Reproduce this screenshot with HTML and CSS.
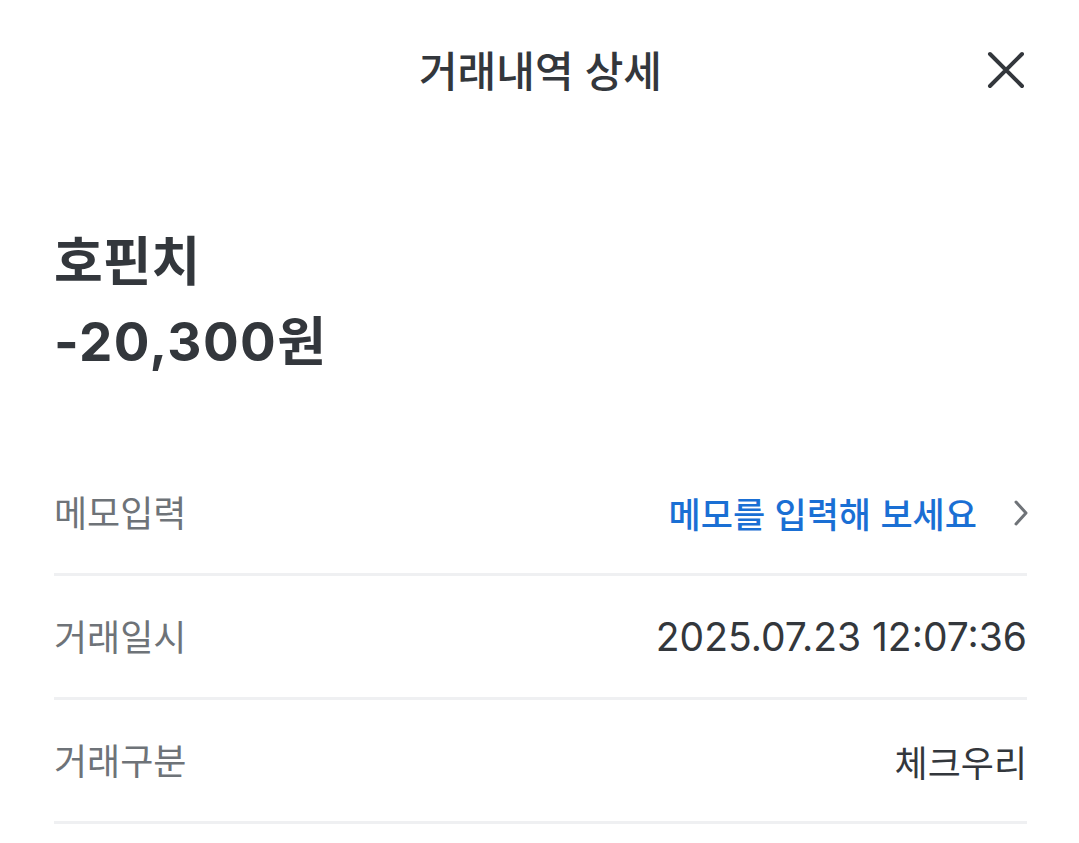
FILE: index.html
```html
<!DOCTYPE html>
<html lang="ko">
<head>
<meta charset="utf-8">
<title>거래내역 상세</title>
<link rel="stylesheet" href="styles.css">
</head>
<body>
<div class="page">
  <header class="header">
    <h1 class="header-title">거래내역 상세</h1>
    <button class="close-btn" aria-label="닫기">
      <svg width="40" height="40" viewBox="0 0 40 40"><path d="M4 4 L36 36 M36 4 L4 36" stroke="#33373c" stroke-width="4" stroke-linecap="round" fill="none"/></svg>
    </button>
  </header>
  <section class="summary">
    <div class="merchant">호핀치</div>
    <div class="amount">-20,300원</div>
  </section>
  <ul class="rows">
    <li class="row">
      <span class="label">메모입력</span>
      <span class="memo-link">메모를 입력해 보세요
        <svg class="chevron" width="16" height="26" viewBox="0 0 16 26"><path d="M3 2 L13 13 L3 24" stroke="#6f7378" stroke-width="3" stroke-linecap="round" stroke-linejoin="round" fill="none"/></svg>
      </span>
    </li>
    <li class="row">
      <span class="label">거래일시</span>
      <span class="value value-date">2025.07.23 12:07:36</span>
    </li>
    <li class="row">
      <span class="label">거래구분</span>
      <span class="value">체크우리</span>
    </li>
  </ul>
</div>
</body>
</html>
```
FILE: styles.css
```css
* { box-sizing: border-box; }
html, body { margin: 0; padding: 0; background: #ffffff; }
body {
  font-family: Inter, "Noto Sans CJK KR", sans-serif;
  color: #33373c;
}
.page { padding: 0 52px 0 54px; }
.header {
  position: relative;
  height: 142px;
  display: flex;
  align-items: center;
  justify-content: center;
  padding-bottom: 6px;
}
.header-title {
  margin: 0;
  font-size: 42px;
  font-weight: 500;
  color: #33373c;
}
.close-btn {
  position: absolute;
  right: 1px;
  top: 50px;
  width: 40px;
  height: 40px;
  padding: 0;
  border: 0;
  background: none;
  display: flex;
}
.summary {
  margin-top: 80px;
  font-weight: 700;
  font-size: 53px;
  line-height: 80px;
  color: #33373c;
}
.amount { letter-spacing: 1.4px; }
.rows {
  list-style: none;
  margin: 70px 0 0;
  padding: 0;
}
.row {
  height: 124px;
  border-bottom: 3px solid #eff0f2;
  display: flex;
  align-items: center;
  justify-content: space-between;
}
.label {
  font-size: 36px;
  color: #6e7378;
  margin-top: -4px;
}
.value {
  font-size: 36px;
  color: #33373c;
}
.value-date { font-size: 39px; }
.memo-link {
  display: flex;
  align-items: center;
  gap: 36px;
  font-size: 35px;
  font-weight: 500;
  color: #1a6fd4;
}
.chevron { margin-right: -2px; }
```
